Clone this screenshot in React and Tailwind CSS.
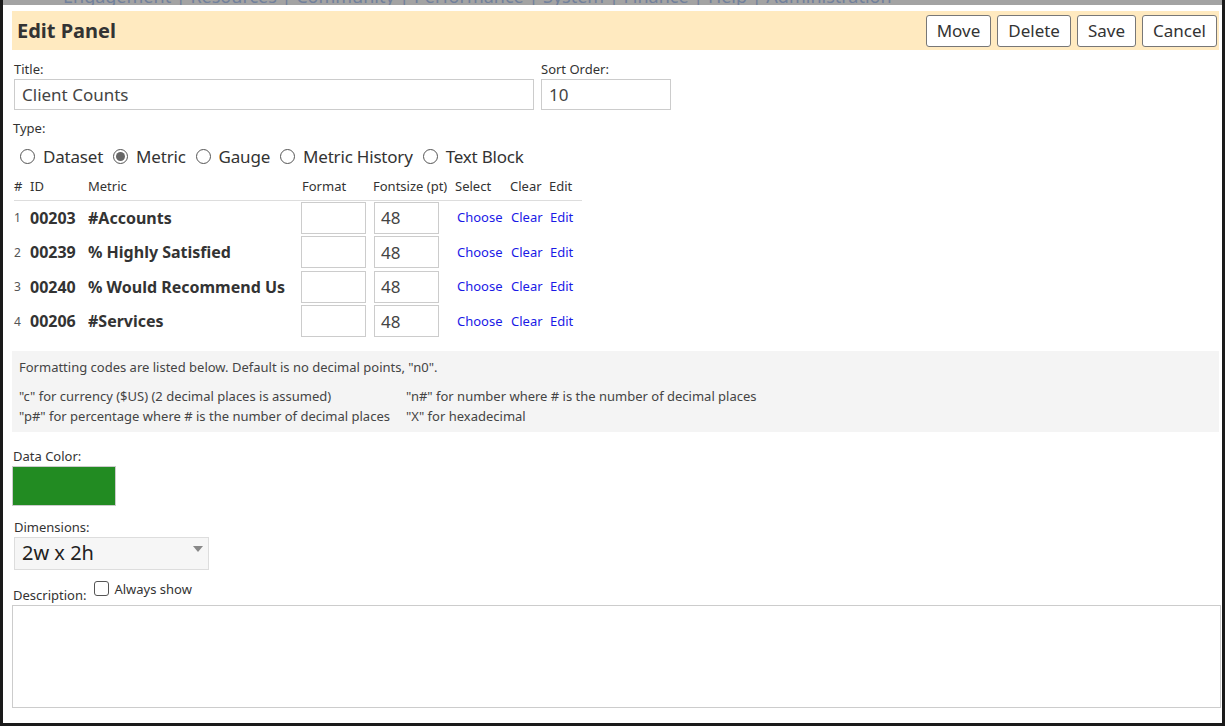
import React, { useState } from "react";

const rows = [
  { n: 1, id: "00203", name: "#Accounts" },
  { n: 2, id: "00239", name: "% Highly Satisfied" },
  { n: 3, id: "00240", name: "% Would Recommend Us" },
  { n: 4, id: "00206", name: "#Services" },
];

const types = ["Dataset", "Metric", "Gauge", "Metric History", "Text Block"];

const Radio = ({ checked }) => (
  <span className="inline-flex w-[15px] h-[15px] rounded-full border border-[#555] items-center justify-center bg-white">
    {checked && <span className="w-[9px] h-[9px] rounded-full bg-[#666]" />}
  </span>
);

const App = () => {
  const [type] = useState("Metric");

  return (
    <div className="w-[1225px] h-[726px] bg-[#1a1a1a] pl-[3px] pr-[3px] pb-[3px] overflow-hidden text-[#333] font-['Segoe_UI','Noto_Sans',sans-serif]">
      <div className="h-full bg-white flex flex-col">
        {/* faded nav behind the modal */}
        <div className="h-[5px] shrink-0 bg-[#a3a3a3] overflow-hidden">
          <div className="mt-[-13px] ml-[60px] text-[18px] leading-[18px] text-[#71809c] whitespace-nowrap">
            Engagement | Resources | Community | Performance | System | Finance | Help | Administration
          </div>
        </div>

        <div className="pl-[9px] pr-[3px] pt-[6px] flex flex-col">
          {/* header */}
          <div className="h-[39px] bg-[#ffeac0] flex items-center justify-between pl-[5px] pr-[2px]">
            <h1 className="text-[20px] font-bold text-[#333]">Edit Panel</h1>
            <div className="flex gap-[6px]">
              {["Move", "Delete", "Save", "Cancel"].map((b) => (
                <button
                  key={b}
                  className="h-[32px] px-[10px] bg-white border border-[#777] rounded-[3px] text-[17px] text-[#333] leading-none"
                >
                  {b}
                </button>
              ))}
            </div>
          </div>

          {/* title / sort order */}
          <div className="flex gap-[7px] mt-[10px] pl-[2px]">
            <div className="flex flex-col">
              <label className="text-[13px] leading-[19px]">Title:</label>
              <div className="w-[520px] h-[31px] border border-[#ccc] flex items-center pl-[7px] text-[17px] text-[#444]">
                Client Counts
              </div>
            </div>
            <div className="flex flex-col">
              <label className="text-[13px] leading-[19px]">Sort Order:</label>
              <div className="w-[130px] h-[31px] border border-[#ccc] flex items-center pl-[7px] text-[17px] text-[#444]">
                10
              </div>
            </div>
          </div>

          {/* type */}
          <div className="text-[13px] leading-[18px] mt-[9px] pl-[1px]">Type:</div>
          <div className="flex items-center gap-[10px] mt-[7px] pl-[8px] text-[17px] text-[#333] tracking-[-0.2px]">
            {types.map((t) => (
              <label key={t} className="flex items-center gap-[8px]">
                <Radio checked={t === type} />
                <span>{t}</span>
              </label>
            ))}
          </div>

          {/* metrics table */}
          <div className="w-[568px] ml-[2px] mt-[8px]">
            <div className="flex items-end h-[23px] border-b border-[#ddd] text-[13px] pb-[3px]">
              <span className="w-[16px]">#</span>
              <span className="w-[58px]">ID</span>
              <span className="w-[213px]">Metric</span>
              <span className="w-[72px] pl-[1px]">Format</span>
              <span className="w-[82px]">Fontsize (pt)</span>
              <span className="w-[55px]">Select</span>
              <span className="w-[39px]">Clear</span>
              <span>Edit</span>
            </div>
            {rows.map((r) => (
              <div key={r.n} className="flex items-center h-[34.5px]">
                <span className="w-[16px] text-[12px] pt-[1px] text-[#555]">{r.n}</span>
                <span className="w-[58px] text-[16px] font-bold">{r.id}</span>
                <span className="w-[213px] text-[16px] font-bold whitespace-nowrap">{r.name}</span>
                <span className="w-[73px]">
                  <span className="block w-[65px] h-[32px] border border-[#ccc]" />
                </span>
                <span className="w-[83px]">
                  <span className="flex w-[65px] h-[32px] border border-[#ccc] items-center pl-[6px] text-[17px] text-[#444]">
                    48
                  </span>
                </span>
                <span className="flex text-[13px] text-[#1a1ae6]">
                  <a className="w-[54px]">Choose</a>
                  <a className="w-[39px]">Clear</a>
                  <a>Edit</a>
                </span>
              </div>
            ))}
          </div>

          {/* formatting info */}
          <div className="bg-[#f4f4f4] mt-[12px] h-[81px] pl-[7px] pt-[7px] text-[13px] text-[#444]">
            <p className="leading-[18px]">Formatting codes are listed below. Default is no decimal points, "n0".</p>
            <div className="grid grid-cols-[387px_auto] mt-[10px] leading-[20px]">
              <span>"c" for currency ($US) (2 decimal places is assumed)</span>
              <span>"n#" for number where # is the number of decimal places</span>
              <span>"p#" for percentage where # is the number of decimal places</span>
              <span>"X" for hexadecimal</span>
            </div>
          </div>

          {/* data color */}
          <div className="text-[13px] leading-[18px] mt-[15px] pl-[1px]">Data Color:</div>
          <div className="w-[104px] h-[40px] bg-[#228b22] border border-[#ccc] mt-[1px]" />

          {/* dimensions */}
          <div className="text-[13px] leading-[19px] mt-[12px] pl-[2px]">Dimensions:</div>
          <div className="ml-[2px] w-[195px] h-[33px] bg-[#f6f6f6] border border-[#ddd] flex items-center justify-between pl-[7px] pr-[5px]">
            <span className="text-[20px] text-[#222]">2w x 2h</span>
            <svg width="10" height="6" viewBox="0 0 10 6" className="mb-[8px]">
              <path d="M0 0 L10 0 L5 6 Z" fill="#888" />
            </svg>
          </div>

          {/* description */}
          <div className="flex items-end mt-[11px] pl-[1px] h-[22px]">
            <span className="text-[13px] leading-[16px]">Description:</span>
            <span className="ml-[8px] w-[15px] h-[15px] border border-[#555] rounded-[3px] bg-white self-start" />
            <span className="ml-[5px] text-[13px] leading-[16px] self-start">Always show</span>
          </div>
          <div className="h-[103px] border border-[#ccc] mr-[-2px] mt-[2px]" />
        </div>
      </div>
    </div>
  );
};

export default App;
